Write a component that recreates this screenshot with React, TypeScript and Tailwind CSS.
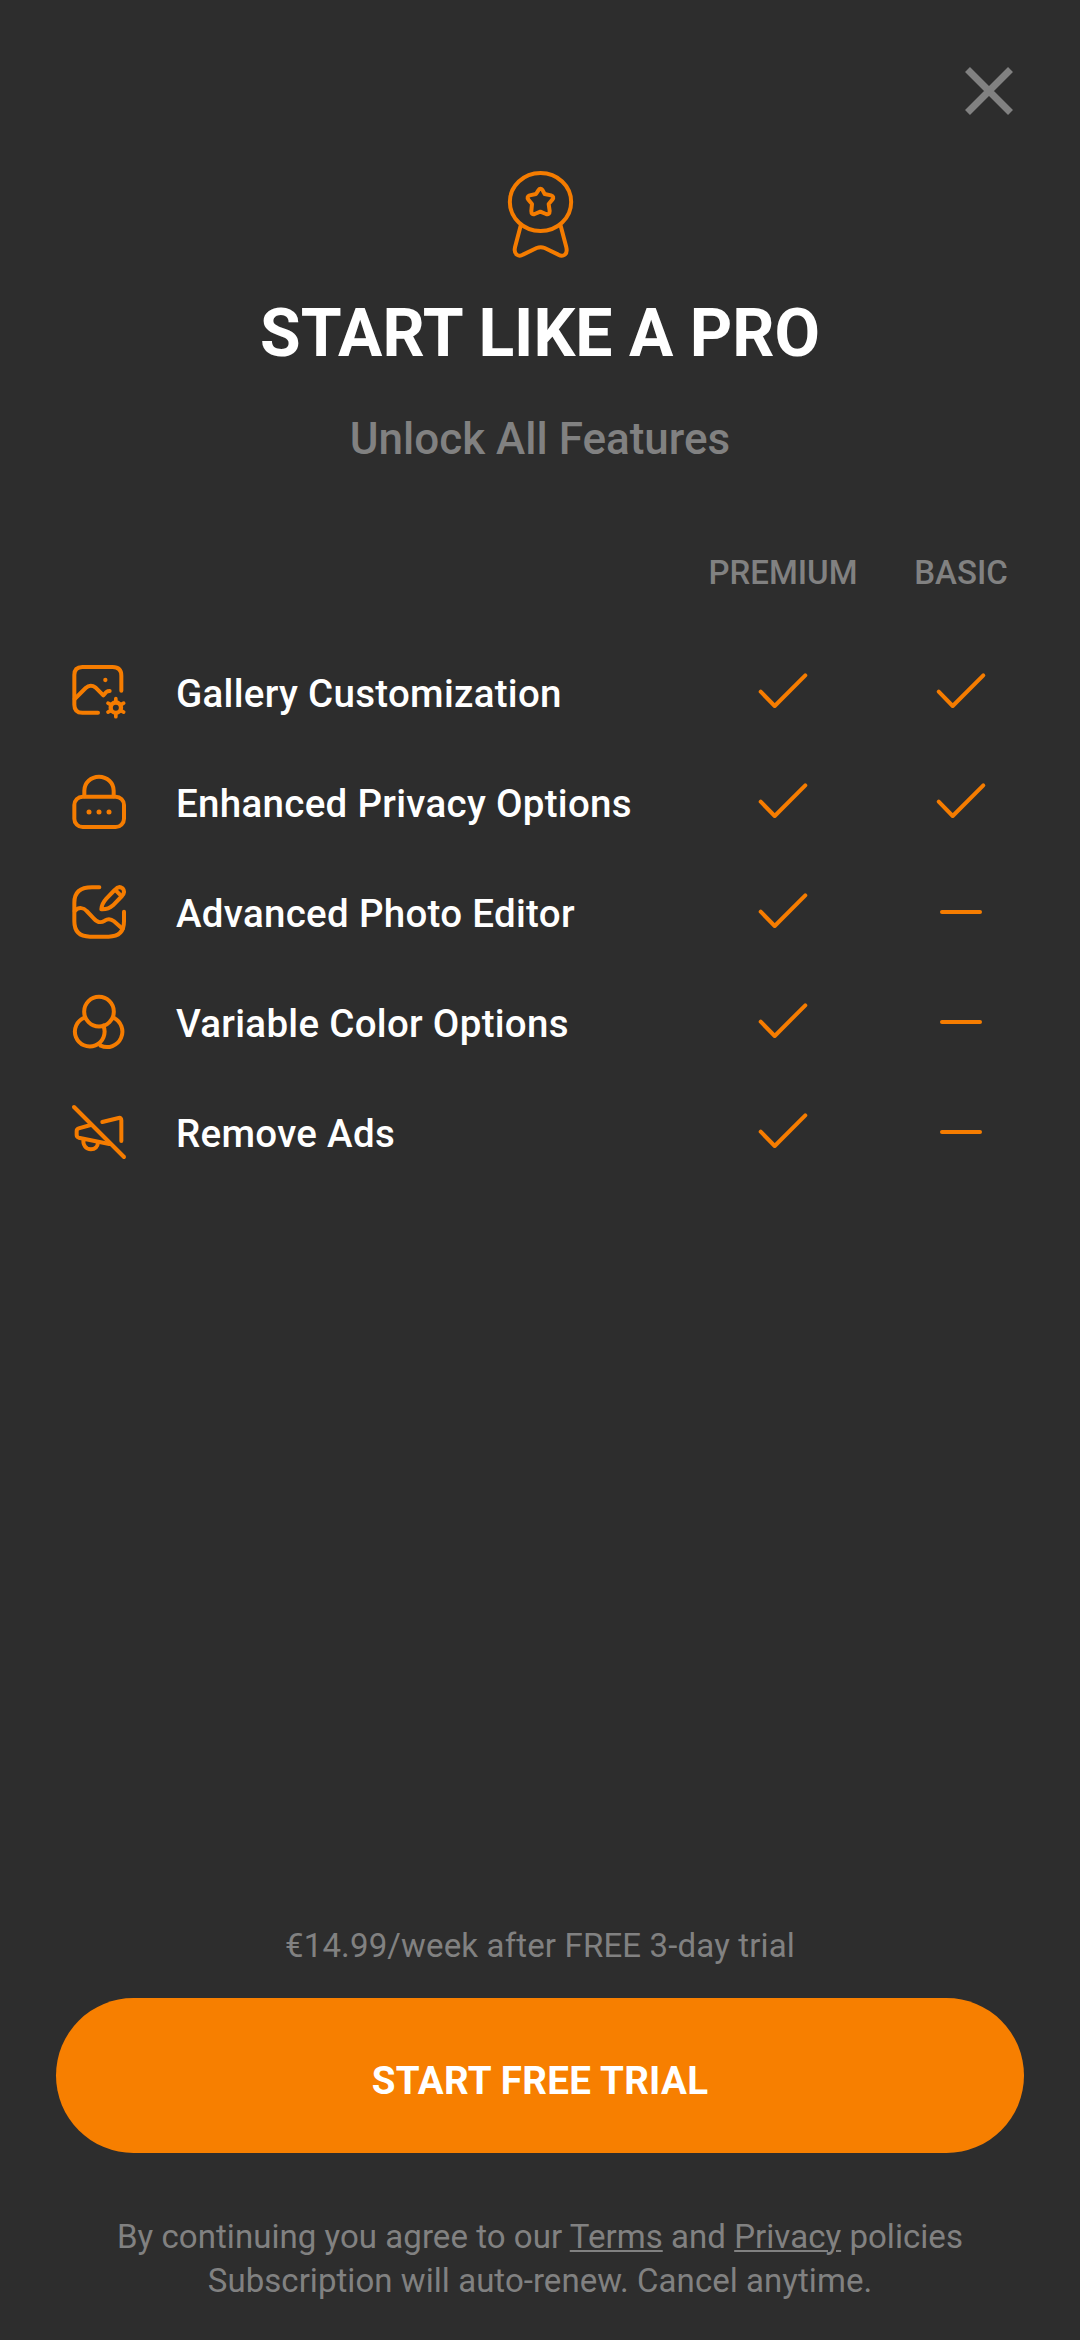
import type { ReactNode } from "react";

function Icon({ children }: { children: ReactNode }) {
  return (
    <svg
      viewBox="0 0 240 240"
      className="h-20 w-20 shrink-0"
      fill="none"
      stroke="currentColor"
      strokeWidth="12"
      strokeLinecap="round"
      strokeLinejoin="round"
    >
      {children}
    </svg>
  );
}

const GalleryIcon = () => (
  <Icon>
    <path d="M114 188H67Q43 188 43 164V75Q43 51 67 51H158Q184 51 184 77V122" />
    <path d="M44 147L77 114Q91 101 107 113L130 136L139 126Q143 123 149 123" />
    <circle cx="136" cy="90" r="6.5" fill="currentColor" stroke="none" />
    <circle cx="167.500" cy="173" r="15.500" strokeWidth="13" />
    <path
      d="M167.500 154V146M183 164L191 159.500M183 182L191 186.500M167.500 192V200M152 182L144 186.500M152 164L144 159.500"
      strokeWidth="11"
    />
  </Icon>
);

const LockIcon = () => (
  <Icon>
    <rect x="43" y="110" width="149" height="91" rx="25" />
    <path d="M73 109V92A44 42 0 0 1 161 92V109" />
    <g fill="currentColor" stroke="none">
      <circle cx="87" cy="156" r="7.500" />
      <circle cx="117" cy="156" r="7.500" />
      <circle cx="147" cy="156" r="7.500" />
    </g>
  </Icon>
);

const EditorIcon = () => (
  <Icon>
    <path d="M118 52H96Q43 52 43 98V154Q43 200 90 200H146Q192 200 192 154V125" />
    <path d="M44 123C57 110 71 113 80 123L101 145C114 160 124 158 134 152C146 144 155 148 162 154L188 177" />
    <path d="M124 118C125 104 129 97 139 86L164 60Q176 46 188 55Q197 65 186 78L159 106C149 115 141 119 124 118Z" />
    <path d="M168 62L182 76" />
  </Icon>
);

const ColorsIcon = () => (
  <Icon>
    <circle cx="117" cy="95" r="44.500" />
    <path d="M74 113A44.500 44.500 0 1 0 130 137" />
    <path d="M160 113A44.500 44.500 0 1 1 122 197" />
  </Icon>
);

const NoAdsIcon = () => (
  <Icon>
    <path d="M42 51L192 201" />
    <path d="M127 96L176 84Q184 82 184 91V153" />
    <path d="M92 105L56 115Q50 117 50 123V135Q50 141 56 143L148 162" />
    <path d="M71 148C67 164 78 178 93 178C105 178 113 170 114 158" />
  </Icon>
);

const Check = () => (
  <svg
    viewBox="0 0 60 60"
    className="h-[60px] w-[60px]"
    fill="none"
    stroke="currentColor"
    strokeWidth="4"
    strokeLinecap="round"
    strokeLinejoin="round"
  >
    <path d="M7.700 29.700L21.700 44L52.300 13.300" />
  </svg>
);

const Dash = () => <span className="h-1 w-[42px] rounded-full bg-current" />;

const features = [
  { label: "Gallery Customization", icon: GalleryIcon, basic: true },
  { label: "Enhanced Privacy Options", icon: LockIcon, basic: true },
  { label: "Advanced Photo Editor", icon: EditorIcon, basic: false },
  { label: "Variable Color Options", icon: ColorsIcon, basic: false },
  { label: "Remove Ads", icon: NoAdsIcon, basic: false },
];

export default function App() {
  return (
    <div className="flex h-[2340px] w-[1080px] flex-col bg-[#2d2d2d] font-['Roboto',sans-serif] text-[#818181]">
      <header className="flex h-[160px] items-start justify-end pt-[61px] pr-[61px]">
        <button aria-label="Close" className="h-[60px] w-[60px]">
          <svg viewBox="0 0 60 60" className="h-full w-full" fill="none" stroke="currentColor" strokeWidth="7">
            <path d="M8.500 8.500L51.500 51.500M51.500 8.500L8.500 51.500" />
          </svg>
        </button>
      </header>

      <section className="flex flex-col items-center">
        <svg
          viewBox="0 0 300 330"
          className="h-[110px] w-[100px] text-[#f57c00]"
          fill="none"
          stroke="currentColor"
          strokeWidth="12"
          strokeLinecap="round"
          strokeLinejoin="round"
        >
          <ellipse cx="151.500" cy="126" rx="92" ry="87" />
          <path d="M92 197L75 262C70 284 87 292 99 284L140 264Q152 259 164 264L205 284C219 292 234 284 229 262L212 197" />
          <path d="M145 91Q151 82 158 91L164 102L183 106Q194 110 187 119L176 132L179 153Q179 165 168 162L151 155L134 162Q124 165 124 153L126 132L115 119Q109 110 119 106L138 102Z" />
        </svg>
        <h1 className="mt-[26px] text-[66px] leading-[76px] font-bold text-white">START LIKE A PRO</h1>
        <p className="mt-[41px] text-[44px] leading-[52px] font-medium">Unlock All Features</p>
      </section>

      <section className="mt-[88px] text-[#f57c00]">
        <div className="flex h-[82px] justify-end pr-[30px] text-[33px] leading-[39px] font-medium text-[#818181]">
          <span className="w-[178px] text-center">PREMIUM</span>
          <span className="w-[178px] text-center">BASIC</span>
        </div>
        {features.map(({ label, icon: FeatureIcon, basic }) => (
          <div key={label} className="flex h-[110px] items-center pr-[30px] pl-[60px]">
            <FeatureIcon />
            <span className="ml-9 flex-1 pt-[7px] text-[38.500px] leading-[46px] font-medium tracking-[0.3px] text-white">
              {label}
            </span>
            <span className="flex w-[178px] justify-center pt-1">
              <Check />
            </span>
            <span className="flex w-[178px] justify-center pt-1">{basic ? <Check /> : <Dash />}</span>
          </div>
        ))}
      </section>

      <footer className="mt-auto flex flex-col items-center px-14 pb-[37px] text-center text-[33px]">
        <p className="leading-[40px] tracking-[0.15px]">€14.99/week after FREE 3-day trial</p>
        <button className="mt-[32px] flex h-[155px] w-full items-center justify-center rounded-[80px] bg-[#f77f00] pt-[11px] text-[38.500px] leading-[46px] font-bold tracking-[0.3px] text-white">
          START FREE TRIAL
        </button>
        <p className="mt-[62px] leading-[44px] tracking-[0.05px]">
          By continuing you agree to our{" "}
          <a className="underline decoration-2 underline-offset-[2px]">Terms</a> and{" "}
          <a className="underline decoration-2 underline-offset-[2px]">Privacy</a> policies
          <br />
          Subscription will auto-renew. Cancel anytime.
        </p>
      </footer>
    </div>
  );
}
